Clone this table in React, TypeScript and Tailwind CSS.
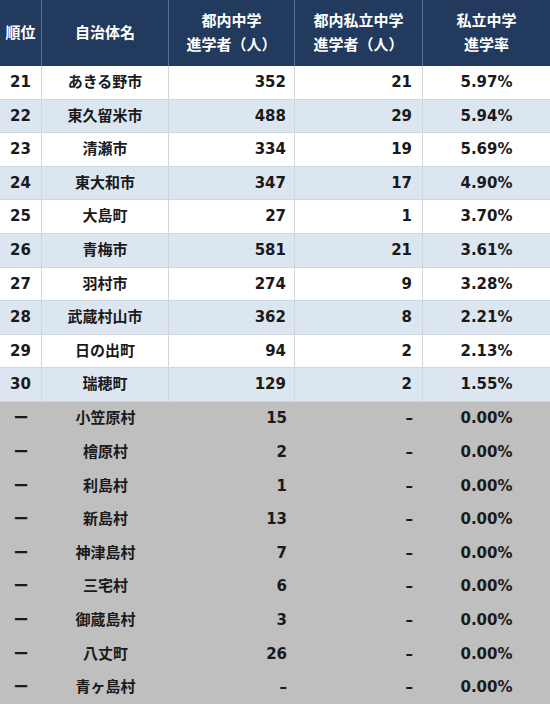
import type { ReactNode } from 'react';

type Row = {
  rank: string;
  name: string;
  total: string;
  privateCount: string;
  rate: string;
};

const rankedRows: Row[] = [
  { rank: '21', name: 'あきる野市', total: '352', privateCount: '21', rate: '5.97%' },
  { rank: '22', name: '東久留米市', total: '488', privateCount: '29', rate: '5.94%' },
  { rank: '23', name: '清瀬市', total: '334', privateCount: '19', rate: '5.69%' },
  { rank: '24', name: '東大和市', total: '347', privateCount: '17', rate: '4.90%' },
  { rank: '25', name: '大島町', total: '27', privateCount: '1', rate: '3.70%' },
  { rank: '26', name: '青梅市', total: '581', privateCount: '21', rate: '3.61%' },
  { rank: '27', name: '羽村市', total: '274', privateCount: '9', rate: '3.28%' },
  { rank: '28', name: '武蔵村山市', total: '362', privateCount: '8', rate: '2.21%' },
  { rank: '29', name: '日の出町', total: '94', privateCount: '2', rate: '2.13%' },
  { rank: '30', name: '瑞穂町', total: '129', privateCount: '2', rate: '1.55%' }
];

const unrankedRows: Row[] = [
  { rank: 'ー', name: '小笠原村', total: '15', privateCount: '–', rate: '0.00%' },
  { rank: 'ー', name: '檜原村', total: '2', privateCount: '–', rate: '0.00%' },
  { rank: 'ー', name: '利島村', total: '1', privateCount: '–', rate: '0.00%' },
  { rank: 'ー', name: '新島村', total: '13', privateCount: '–', rate: '0.00%' },
  { rank: 'ー', name: '神津島村', total: '7', privateCount: '–', rate: '0.00%' },
  { rank: 'ー', name: '三宅村', total: '6', privateCount: '–', rate: '0.00%' },
  { rank: 'ー', name: '御蔵島村', total: '3', privateCount: '–', rate: '0.00%' },
  { rank: 'ー', name: '八丈町', total: '26', privateCount: '–', rate: '0.00%' },
  { rank: 'ー', name: '青ヶ島村', total: '–', privateCount: '–', rate: '0.00%' }
];

const cols = 'grid grid-cols-[42px_127px_126px_128px_127px]';

function HeadCell({ children, last = false }: { children: ReactNode; last?: boolean }) {
  return (
    <div
      className={`flex flex-col items-center justify-center leading-[24px] ${
        last ? '' : 'border-r border-[#5b6f8f]'
      }`}
    >
      {children}
    </div>
  );
}

function BodyRow({ row, tone }: { row: Row; tone: 'white' | 'blue' | 'gray' }) {
  const bg = tone === 'white' ? 'bg-white' : tone === 'blue' ? 'bg-[#dce6f1]' : 'bg-[#bfbfbf]';
  const line = tone === 'gray' ? '' : 'border-r border-[#cfd6df]';
  const bottom = tone === 'gray' ? '' : 'border-b border-[#cfd6df]';
  return (
    <div className={`${cols} h-[33.6px] ${bg} ${bottom}`}>
      <div className={`flex items-center justify-center ${line}`}>{row.rank}</div>
      <div className={`flex items-center justify-center ${line}`}>{row.name}</div>
      <div className={`flex items-center justify-end pr-[8px] ${line}`}>{row.total}</div>
      <div className={`flex items-center justify-end pr-[10px] ${line}`}>{row.privateCount}</div>
      <div className="flex items-center justify-center">{row.rate}</div>
    </div>
  );
}

export default function App() {
  return (
    <div className="w-[550px] h-[704px] overflow-hidden bg-white font-['DejaVu_Sans','Noto_Sans_CJK_JP',sans-serif] text-[15px] font-bold text-[#1a1a1a]">
      <div className={`${cols} h-[66px] bg-[#223a5e] text-white`}>
        <HeadCell>順位</HeadCell>
        <HeadCell>自治体名</HeadCell>
        <HeadCell>
          <span>都内中学</span>
          <span>進学者（人）</span>
        </HeadCell>
        <HeadCell>
          <span>都内私立中学</span>
          <span>進学者（人）</span>
        </HeadCell>
        <HeadCell last>
          <span>私立中学</span>
          <span>進学率</span>
        </HeadCell>
      </div>
      {rankedRows.map((row, i) => (
        <BodyRow key={row.rank} row={row} tone={i % 2 === 0 ? 'white' : 'blue'} />
      ))}
      {unrankedRows.map((row) => (
        <BodyRow key={row.name} row={row} tone="gray" />
      ))}
    </div>
  );
}
